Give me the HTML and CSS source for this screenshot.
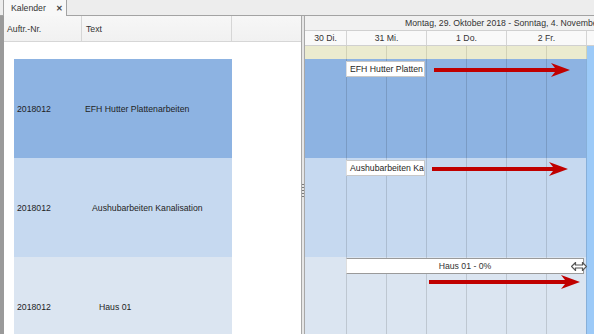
FILE: index.html
```html
<!DOCTYPE html>
<html lang="de">
<head>
    <meta charset="UTF-8">
    <title>Kalender</title>
    <link rel="stylesheet" href="styles.css">
</head>
<body>

<!-- Registerkarte -->
<div class="tabstrip">
    <div class="tab"><span>Kalender</span><span class="tab-close">✕</span></div>
</div>

<div class="workspace">
    <!-- Auftragsliste links -->
    <div class="grid-pane">
        <div class="grid-head">
            <div class="hcell c-nr">Auftr.-Nr.</div>
            <div class="hcell c-text">Text</div>
            <div class="hcell c-rest"></div>
        </div>
        <div class="filter-row"></div>
        <div class="grid-body">
            <div class="grow row-a">
                <div class="c-nr">2018012</div>
                <div class="c-text indent-1">EFH Hutter Plattenarbeiten</div>
            </div>
            <div class="grow row-b">
                <div class="c-nr">2018012</div>
                <div class="c-text indent-2">Aushubarbeiten Kanalisation</div>
            </div>
            <div class="grow row-c">
                <div class="c-nr">2018012</div>
                <div class="c-text indent-3">Haus 01</div>
            </div>
        </div>
    </div>

    <div class="splitter"><div class="grip"></div></div>

    <!-- Zeitachse rechts -->
    <div class="gantt-pane">
        <div class="g-title">Montag, 29. Oktober 2018 - Sonntag, 4. November 2018</div>
        <div class="g-days">
            <div>30 Di.</div>
            <div>31 Mi.</div>
            <div>1 Do.</div>
            <div>2 Fr.</div>
            <div></div>
        </div>
        <div class="g-halfs slots">
            <div></div><div></div><div></div><div></div><div></div><div></div><div></div><div class="now"></div>
        </div>

        <div class="g-row row-a slots">
            <div></div><div></div><div></div><div></div><div></div><div></div><div></div><div class="now"></div>
            <div class="task-label">EFH Hutter Platten</div>
            <svg class="arrow arrow-1" viewBox="0 0 136 14"><polygon points="0,5 121,5 117,0 136,7 117,14 121,9 0,9"/></svg>
        </div>
        <div class="g-row row-b slots">
            <div></div><div></div><div></div><div></div><div></div><div></div><div></div><div class="now"></div>
            <div class="task-label">Aushubarbeiten Ka</div>
            <svg class="arrow arrow-2" viewBox="0 0 136 14"><polygon points="0,5 121,5 117,0 136,7 117,14 121,9 0,9"/></svg>
        </div>
        <div class="g-row row-c slots">
            <div></div><div></div><div></div><div></div><div></div><div></div><div></div><div class="now"></div>
            <div class="task-bar">Haus 01 - 0%
                <svg class="resize" viewBox="0 0 16 9"><polygon points="0.5,4.5 4.5,0.5 4.5,3 11.5,3 11.5,0.5 15.5,4.5 11.5,8.5 11.5,6 4.5,6 4.5,8.5"/></svg>
            </div>
            <svg class="arrow arrow-3" viewBox="0 0 151 14"><polygon points="0,5 136,5 132,0 151,7 132,14 136,9 0,9"/></svg>
        </div>
    </div>
</div>

</body>
</html>
```

FILE: styles.css
```css
html, body {
    margin: 0;
    height: 100%;
    overflow: hidden;
}
body {
    font-family: "Liberation Sans", Arial, sans-serif;
    font-size: 8.7px;
    color: #1e1e1e;
    background: #f0f0f0;
}

/* Registerkarte */
.tabstrip {
    height: 15px;
    border-bottom: 1px solid #a3a3a3;
    background: #ededed;
    padding-left: 3px;
}
.tab {
    display: inline-flex;
    align-items: center;
    gap: 10px;
    box-sizing: border-box;
    width: 64px;
    height: 16px;
    padding: 0 0 0 7px;
    background: #f8f8f8;
    border: 1px solid #a3a3a3;
    border-top: none;
    border-bottom: none;
    color: #333;
}
.tab-close {
    font-size: 8px;
    font-weight: bold;
    color: #444;
}

.workspace {
    display: flex;
    height: calc(100% - 16px);
    overflow: hidden;
}

/* linke Liste */
.grid-pane {
    width: 297px;
    border-left: 4px solid #9a9a9a;
    background: #fff;
    overflow: hidden;
}
.grid-head {
    display: flex;
    height: 25px;
    border-bottom: 1px solid #d6d6d6;
    background: linear-gradient(#f7f7f7, #f1f1f1);
}
.hcell {
    display: flex;
    align-items: center;
    box-sizing: border-box;
    color: #333;
}
.grid-head .c-nr {
    width: 78px;
    padding-left: 3px;
    border-right: 1px solid #d6d6d6;
}
.grid-head .c-text {
    width: 150px;
    padding-left: 4px;
    border-right: 1px solid #d6d6d6;
}
.grid-head .c-rest {
    flex: 1;
}
.filter-row {
    height: 17px;
}
.grid-body {
    padding-left: 10px;
}
.grow {
    display: flex;
    align-items: center;
    width: 218px;
    height: 99px;
}
.grow .c-nr {
    width: 65px;
    padding-left: 3px;
}
.indent-1 { padding-left: 3px; }
.indent-2 { padding-left: 10px; }
.indent-3 { padding-left: 17px; }

.row-a { background: #8db3e2; }
.row-b { background: #c6d9f0; }
.row-c { background: #dbe5f1; }

/* Trenner */
.splitter {
    width: 2px;
    border-left: 1px solid #a8a8a8;
    border-right: 1px solid #a8a8a8;
    background: #e6e6e6;
    display: flex;
    align-items: flex-start;
}
.grip {
    margin-top: 168px;
    width: 2px;
    height: 15px;
    background: repeating-linear-gradient(#7a7a7a 0 1px, transparent 1px 3px);
}

/* Zeitachse */
.gantt-pane {
    flex: 1;
    overflow: hidden;
    background: #fff;
}
.g-title {
    height: 14px;
    line-height: 14px;
    padding-left: 100px;
    white-space: nowrap;
    overflow: hidden;
    background: #f1f1f1;
    border-bottom: 1px solid #d0d0d0;
    color: #333;
}
.g-days {
    display: grid;
    grid-template-columns: 41px 80px 80px 80px 1fr;
    height: 14px;
    background: #f9f9f9;
    border-bottom: 1px solid #d0d0d0;
}
.g-days div {
    text-align: center;
    line-height: 14px;
    color: #333;
}
.g-days div + div {
    border-left: 1px solid #d4d4d4;
}
.slots {
    display: grid;
    grid-template-columns: 41px repeat(6, 40px) 1fr;
}
.slots > div + div {
    border-left: 1px solid rgba(0, 0, 0, 0.13);
}
.slots > .now {
    background: #9ccaf8;
}
.g-halfs {
    height: 13px;
    background: #ebebcf;
}
.g-halfs > div + div {
    border-left: 1px solid #d2d2b6;
}
.g-row {
    position: relative;
    height: 99px;
}

.task-label {
    position: absolute;
    left: 41px;
    top: 2px;
    width: 79px;
    height: 16px;
    box-sizing: border-box;
    padding-left: 3px;
    line-height: 15px;
    background: #fff;
    border: 1px solid #c8c8c8;
    white-space: nowrap;
    overflow: hidden;
}
.task-bar {
    position: absolute;
    left: 41px;
    top: 1px;
    width: 238px;
    height: 16px;
    box-sizing: border-box;
    border: 1px solid #9a9a9a;
    background: #fff;
    text-align: center;
    line-height: 14px;
    color: #333;
}
.resize {
    position: absolute;
    right: -4px;
    top: 3px;
    width: 16px;
    height: 9px;
    fill: #fff;
    stroke: #555;
    stroke-width: 1.2;
}

.arrow {
    position: absolute;
    height: 14px;
    fill: #c00000;
}
.arrow-1 { left: 129px; top: 4px; width: 136px; }
.arrow-2 { left: 127px; top: 4px; width: 136px; }
.arrow-3 { left: 124px; top: 18px; width: 151px; }
```
